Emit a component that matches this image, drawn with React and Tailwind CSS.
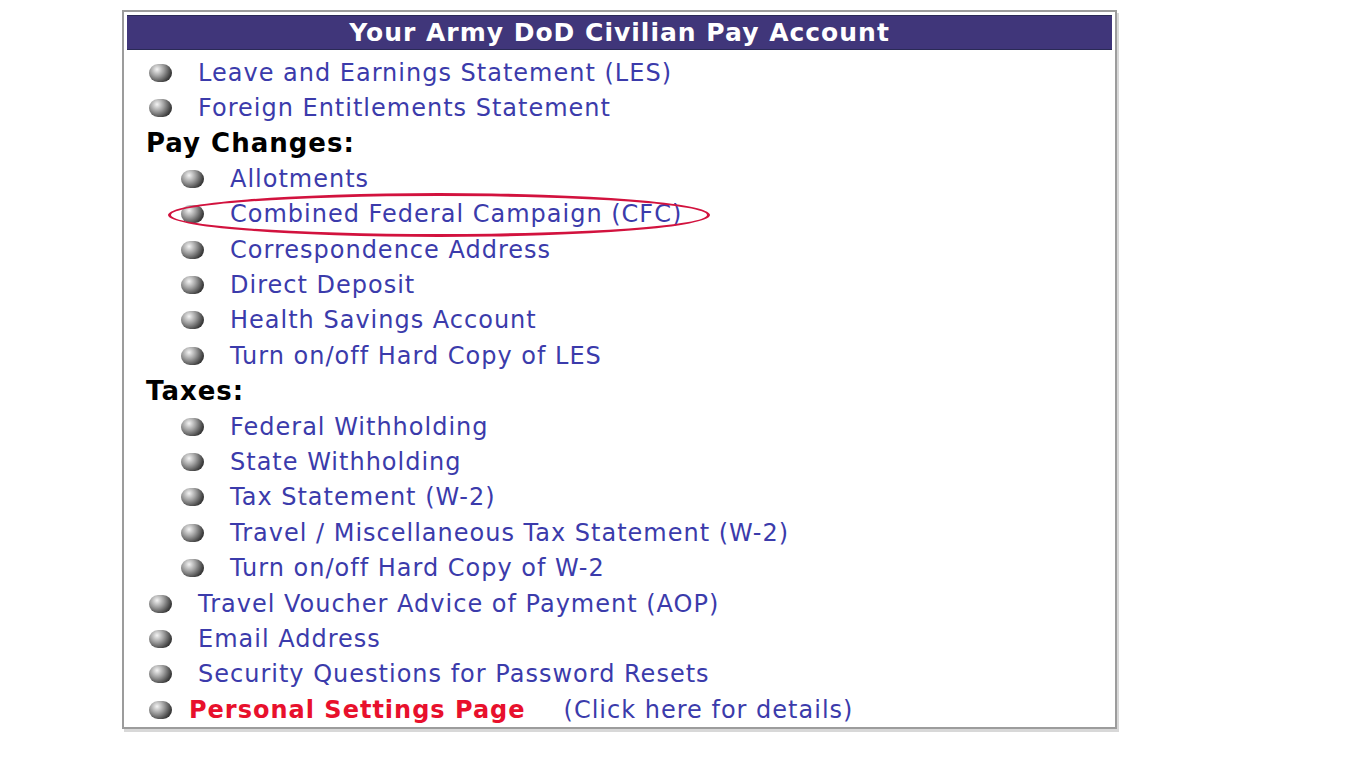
import React from 'react';

const Bullet = () => (
  <span className="inline-block w-[23px] h-[18px] rounded-full bg-[radial-gradient(circle_at_35%_30%,#f4f4f4_0%,#a0a0a0_35%,#404040_72%,#151515_100%)]" />
);

const Row = ({ label, indent, children }) => (
  <div className={`flex items-center h-[35.4px] ${indent ? 'pl-[54px]' : 'pl-[22px]'}`}>
    <Bullet />
    {children || (
      <a className="ml-[26px] text-[#3b3bab] tracking-[1px]" href="#">
        {label}
      </a>
    )}
  </div>
);

const Heading = ({ label }) => (
  <div className="flex items-center h-[35.4px] pl-[19px] font-bold text-[26px] text-black tracking-[1px]">
    {label}
  </div>
);

const App = () => (
  <div className="w-[1352px] h-[767px] bg-white pt-[10px] pl-[122px]" style={{ fontFamily: '"DejaVu Sans", Verdana, sans-serif' }}>
    <div className="relative w-[995px] border-2 border-[#9c9c9c] shadow-[2px_3px_0_#d8d8d8] p-[3px] pb-0 text-[24px] leading-none">
      <div className="h-[35px] bg-[#40367a] border-y border-[#2a2a55] flex items-center justify-center text-white font-bold text-[25px] tracking-[1px]">
        Your Army DoD Civilian Pay Account
      </div>
      <div className="pt-[5px]">
        <Row label="Leave and Earnings Statement (LES)" />
        <Row label="Foreign Entitlements Statement" />
        <Heading label="Pay Changes:" />
        <Row indent label="Allotments" />
        <Row indent label="Combined Federal Campaign (CFC)" />
        <Row indent label="Correspondence Address" />
        <Row indent label="Direct Deposit" />
        <Row indent label="Health Savings Account" />
        <Row indent label="Turn on/off Hard Copy of LES" />
        <Heading label="Taxes:" />
        <Row indent label="Federal Withholding" />
        <Row indent label="State Withholding" />
        <Row indent label="Tax Statement (W-2)" />
        <Row indent label="Travel / Miscellaneous Tax Statement (W-2)" />
        <Row indent label="Turn on/off Hard Copy of W-2" />
        <Row label="Travel Voucher Advice of Payment (AOP)" />
        <Row label="Email Address" />
        <Row label="Security Questions for Password Resets" />
        <Row>
          <a className="ml-[17px] text-[#e8102c] font-bold tracking-[1px]" href="#">
            Personal Settings Page
          </a>
          <a className="ml-[38px] text-[#3b3bab] tracking-[1px]" href="#">
            (Click here for details)
          </a>
        </Row>
      </div>
      <div className="absolute left-[44px] top-[181px] w-[542px] h-[44px] rounded-[50%] border-[3px] border-[#d2123e]" />
    </div>
  </div>
);

export default App;
